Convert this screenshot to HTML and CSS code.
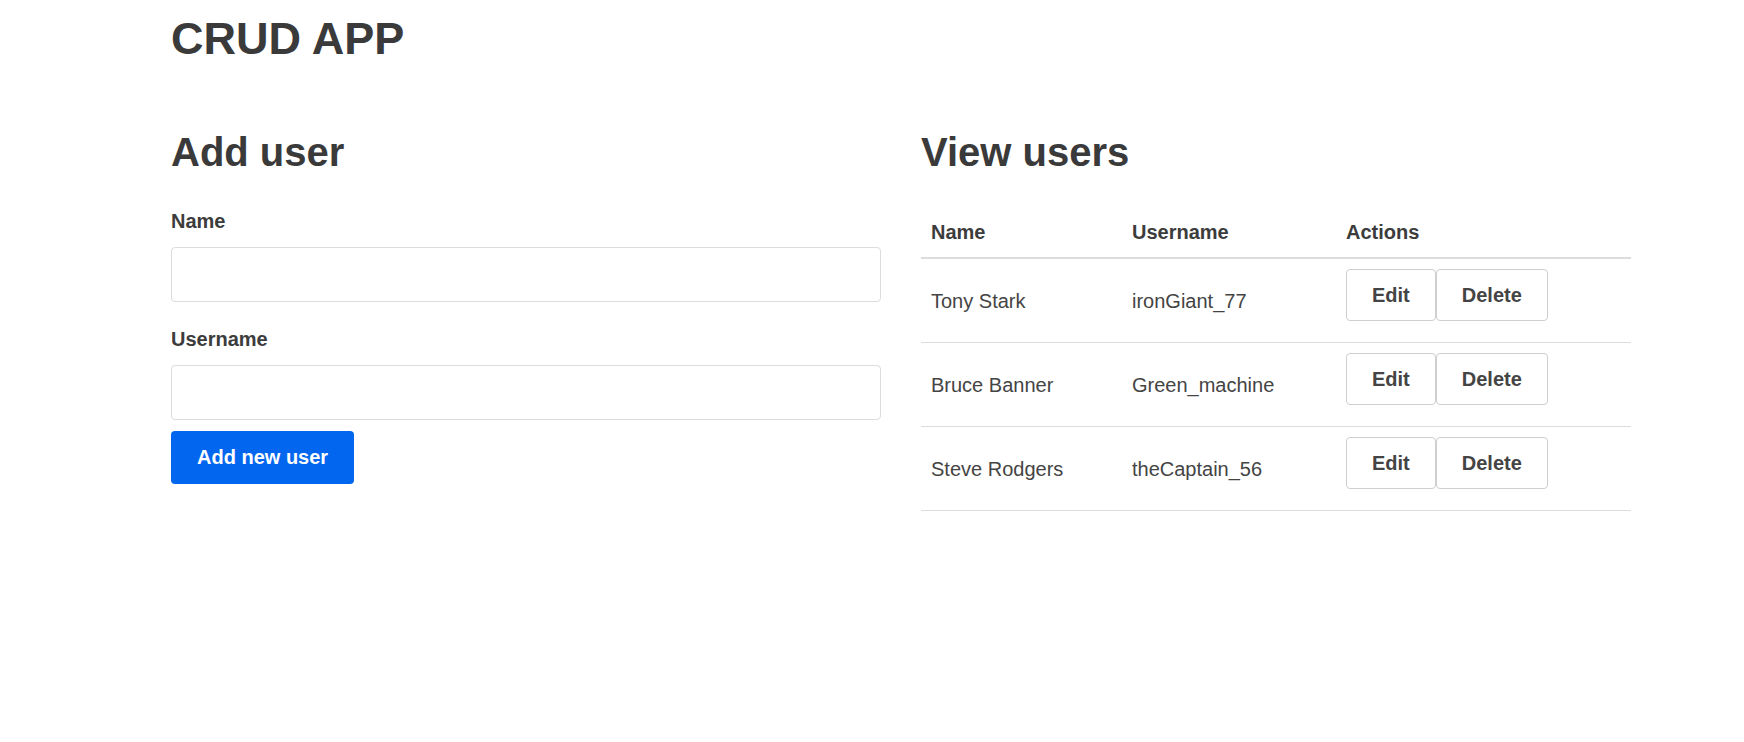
FILE: index.html
```html
<!DOCTYPE html>
<html lang="en">
<head>
<meta charset="utf-8">
<title>CRUD App</title>
<link rel="stylesheet" href="styles.css">
</head>
<body>
<div class="page">
  <h1 class="title">CRUD APP</h1>
  <div class="columns">
    <section class="col">
      <h2 class="heading">Add user</h2>
      <form class="form">
        <label class="label" for="name">Name</label>
        <input class="input input-first" id="name" type="text">
        <label class="label" for="username">Username</label>
        <input class="input input-last" id="username" type="text">
        <button class="btn-primary" type="button">Add new user</button>
      </form>
    </section>
    <section class="col">
      <h2 class="heading">View users</h2>
      <table class="table">
        <thead>
          <tr>
            <th class="c-name">Name</th>
            <th class="c-user">Username</th>
            <th>Actions</th>
          </tr>
        </thead>
        <tbody>
          <tr>
            <td>Tony Stark</td>
            <td>ironGiant_77</td>
            <td><div class="actions"><button class="btn" type="button">Edit</button><button class="btn" type="button">Delete</button></div></td>
          </tr>
          <tr>
            <td>Bruce Banner</td>
            <td>Green_machine</td>
            <td><div class="actions"><button class="btn" type="button">Edit</button><button class="btn" type="button">Delete</button></div></td>
          </tr>
          <tr>
            <td>Steve Rodgers</td>
            <td>theCaptain_56</td>
            <td><div class="actions"><button class="btn" type="button">Edit</button><button class="btn" type="button">Delete</button></div></td>
          </tr>
        </tbody>
      </table>
    </section>
  </div>
</div>
</body>
</html>
```

FILE: styles.css
```css
* { box-sizing: border-box; }

body {
  margin: 0;
  background: #fff;
  color: #3c3c3c;
  font-family: "Liberation Sans", Arial, sans-serif;
  font-size: 20px;
  line-height: 1.5;
}

.page {
  padding: 0 113px 0 171px;
}

.title {
  margin: 12px 0 62px;
  font-size: 45px;
  line-height: 1.2;
  font-weight: 700;
  color: #3a3a3a;
}

.columns {
  display: grid;
  grid-template-columns: 710px 710px;
  column-gap: 40px;
  align-items: start;
}

.heading {
  margin: 0;
  font-size: 40px;
  line-height: 1.2;
  font-weight: 700;
  color: #3a3a3a;
}

.form {
  display: flex;
  flex-direction: column;
  align-items: flex-start;
  margin-top: 30px;
}

.label {
  display: block;
  font-weight: 700;
  line-height: 30px;
  margin-bottom: 11px;
}

.input {
  width: 100%;
  height: 55px;
  border: 1px solid #dcdcdc;
  border-radius: 4px;
  background: #fff;
  font: inherit;
  padding: 0 12px;
}

.input-first { margin-bottom: 22px; }
.input-last { margin-bottom: 11px; }

.btn-primary {
  height: 53px;
  padding: 0 26px;
  border: none;
  border-radius: 4px;
  background: #0366ee;
  color: #fff;
  font-family: inherit;
  font-size: 20px;
  font-weight: 700;
}

.table {
  width: 100%;
  margin-top: 31px;
  border-collapse: collapse;
}

.table th {
  text-align: left;
  padding: 10px;
  line-height: 30px;
  font-weight: 700;
  border-bottom: 2px solid #dcdcdc;
}

.c-name { width: 201px; }
.c-user { width: 214px; }

.table td {
  padding: 10px;
  border-bottom: 1px solid #dcdcdc;
  vertical-align: middle;
  color: #444;
}

.actions {
  display: flex;
  margin-bottom: 11px;
}

.btn {
  height: 52px;
  padding: 0 25px;
  border: 1px solid #cfcfcf;
  border-radius: 4px;
  background: #fff;
  color: #444;
  font-family: inherit;
  font-size: 20px;
  font-weight: 700;
}
```
